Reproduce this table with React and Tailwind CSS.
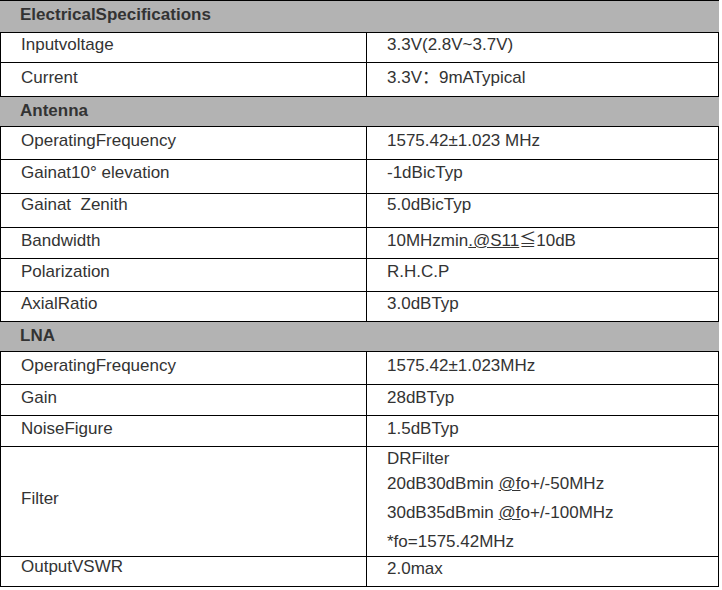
import React from "react";

const Header = ({ title, h }) => (
  <div className={`flex border-t border-black bg-[#b3b3b3] ${h}`}>
    <div className="pl-5 pt-[4px] font-bold">{title}</div>
  </div>
);

const Row = ({ label, value, h, pt }) => (
  <div className={`flex border-t border-black ${h}`}>
    <div className={`w-[367px] shrink-0 border-l border-r border-black pl-5 ${pt}`}>{label}</div>
    <div className={`flex-1 border-r border-black pl-5 ${pt}`}>{value}</div>
  </div>
);

const App = () => {
  return (
    <div className="w-[722px] h-[590px] bg-white overflow-hidden">
      {/* spec table */}
      <div
        className="w-[719px] text-[17px] leading-[20px] text-[#333333]"
        style={{ fontFamily: '"Liberation Sans", Arial, "Noto Sans CJK SC", sans-serif' }}
      >
        <Header title="ElectricalSpecifications" h="h-[32px]" />
        <Row label="Inputvoltage" value="3.3V(2.8V~3.7V)" h="h-[30px]" pt="pt-[2px]" />
        <Row label="Current" value="3.3V：9mATypical" h="h-[34px]" pt="pt-[5px]" />

        <Header title="Antenna" h="h-[30px]" />
        <Row label="OperatingFrequency" value="1575.42±1.023 MHz" h="h-[33px]" pt="pt-[4px]" />
        <Row label="Gainat10° elevation" value="-1dBicTyp" h="h-[34px]" pt="pt-[3px]" />
        <Row
          label={<span className="whitespace-pre">Gainat  Zenith</span>}
          value="5.0dBicTyp"
          h="h-[34px]"
          pt="pt-[1px]"
        />
        <Row
          label="Bandwidth"
          value={
            <>
              10MHzmin<span className="underline">.@S11</span>≦10dB
            </>
          }
          h="h-[31px]"
          pt="pt-[3px]"
        />
        <Row label="Polarization" value="R.H.C.P" h="h-[33px]" pt="pt-[3px]" />
        <Row label="AxialRatio" value="3.0dBTyp" h="h-[30px]" pt="pt-[2px]" />

        <Header title="LNA" h="h-[30px]" />
        <Row label="OperatingFrequency" value="1575.42±1.023MHz" h="h-[33px]" pt="pt-[4px]" />
        <Row label="Gain" value="28dBTyp" h="h-[31px]" pt="pt-[3px]" />
        <Row label="NoiseFigure" value="1.5dBTyp" h="h-[31px]" pt="pt-[3px]" />

        {/* filter row */}
        <div className="flex border-t border-black h-[110px]">
          <div className="w-[367px] shrink-0 border-l border-r border-black pl-5 pt-[42px]">Filter</div>
          <div className="flex-1 border-r border-black pl-5 pt-[2px]">
            <div>DRFilter</div>
            <div className="mt-[5px]">
              20dB30dBmin <span className="underline">@f</span>o+/-50MHz
            </div>
            <div className="mt-[9px]">
              30dB35dBmin <span className="underline">@f</span>o+/-100MHz
            </div>
            <div className="mt-[9px]">*fo=1575.42MHz</div>
          </div>
        </div>

        <div className="flex border-t border-b border-black h-[31px]">
          <div className="w-[367px] shrink-0 border-l border-r border-black pl-5 pt-[0px]">OutputVSWR</div>
          <div className="flex-1 border-r border-black pl-5 pt-[2px]">2.0max</div>
        </div>
      </div>
    </div>
  );
};

export default App;
